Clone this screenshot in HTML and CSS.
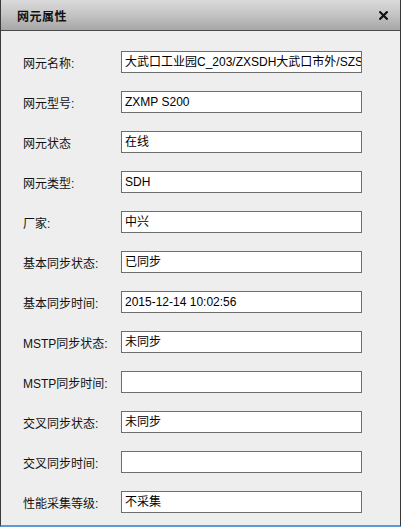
FILE: index.html
```html
<!DOCTYPE html>
<html>
<head>
<meta charset="utf-8">
<link rel="stylesheet" href="styles.css">
</head>
<body>
<div class="window">
  <div class="titlebar">
    <span class="title">网元属性</span>
    <svg class="close" width="9" height="9" viewBox="0 0 9 9"><path d="M1.2 1.2 L7.8 7.8 M7.8 1.2 L1.2 7.8" stroke="#111" stroke-width="2.2" stroke-linecap="square"/></svg>
  </div>
  <div class="content">
    <div class="row"><label class="lbl">网元名称:</label><div class="field">大武口工业园C_203/ZXSDH大武口市外/SZSDH</div></div>
    <div class="row"><label class="lbl">网元型号:</label><div class="field">ZXMP S200</div></div>
    <div class="row"><label class="lbl">网元状态</label><div class="field">在线</div></div>
    <div class="row"><label class="lbl">网元类型:</label><div class="field">SDH</div></div>
    <div class="row"><label class="lbl">厂家:</label><div class="field">中兴</div></div>
    <div class="row"><label class="lbl">基本同步状态:</label><div class="field">已同步</div></div>
    <div class="row"><label class="lbl">基本同步时间:</label><div class="field">2015-12-14 10:02:56</div></div>
    <div class="row"><label class="lbl">MSTP同步状态:</label><div class="field">未同步</div></div>
    <div class="row"><label class="lbl">MSTP同步时间:</label><div class="field"></div></div>
    <div class="row"><label class="lbl">交叉同步状态:</label><div class="field">未同步</div></div>
    <div class="row"><label class="lbl">交叉同步时间:</label><div class="field"></div></div>
    <div class="row"><label class="lbl">性能采集等级:</label><div class="field">不采集</div></div>
  </div>
</div>
</body>
</html>
```
FILE: styles.css
```css
html, body {
  margin: 0;
  padding: 0;
  background: #ececec;
}
.window {
  width: 401px;
  height: 527px;
  box-sizing: border-box;
  border-left: 1px solid #3a3a3a;
  border-right: 1px solid #3a3a3a;
  border-bottom: 2px solid #5a9bd6;
  background: #eeeeee;
  display: flex;
  flex-direction: column;
  font-family: "Liberation Sans", "Noto Sans CJK SC", sans-serif;
  font-size: 12px;
  color: #111;
}
.titlebar {
  height: 31px;
  box-sizing: border-box;
  border-bottom: 1px solid #4a4a4a;
  background: linear-gradient(#dadada, #c6c6c6 45%, #a6a6a6);
  display: flex;
  align-items: center;
  justify-content: space-between;
  padding: 0 12px 0 16px;
}
.title {
  font-weight: bold;
  font-size: 12px;
  color: #111;
  letter-spacing: 0.5px;
}
.close {
  display: block;
}
.content {
  display: flex;
  flex-direction: column;
  gap: 18px;
  padding: 20px 0 0 22px;
}
.row {
  display: flex;
  align-items: center;
  height: 22px;
}
.lbl {
  width: 98px;
  flex: none;
  color: #111;
}
.field {
  width: 241px;
  height: 22px;
  box-sizing: border-box;
  border: 1px solid #6e6e6e;
  background: #fff;
  padding: 0 3px;
  line-height: 20px;
  white-space: nowrap;
  overflow: hidden;
  color: #000;
}
```
